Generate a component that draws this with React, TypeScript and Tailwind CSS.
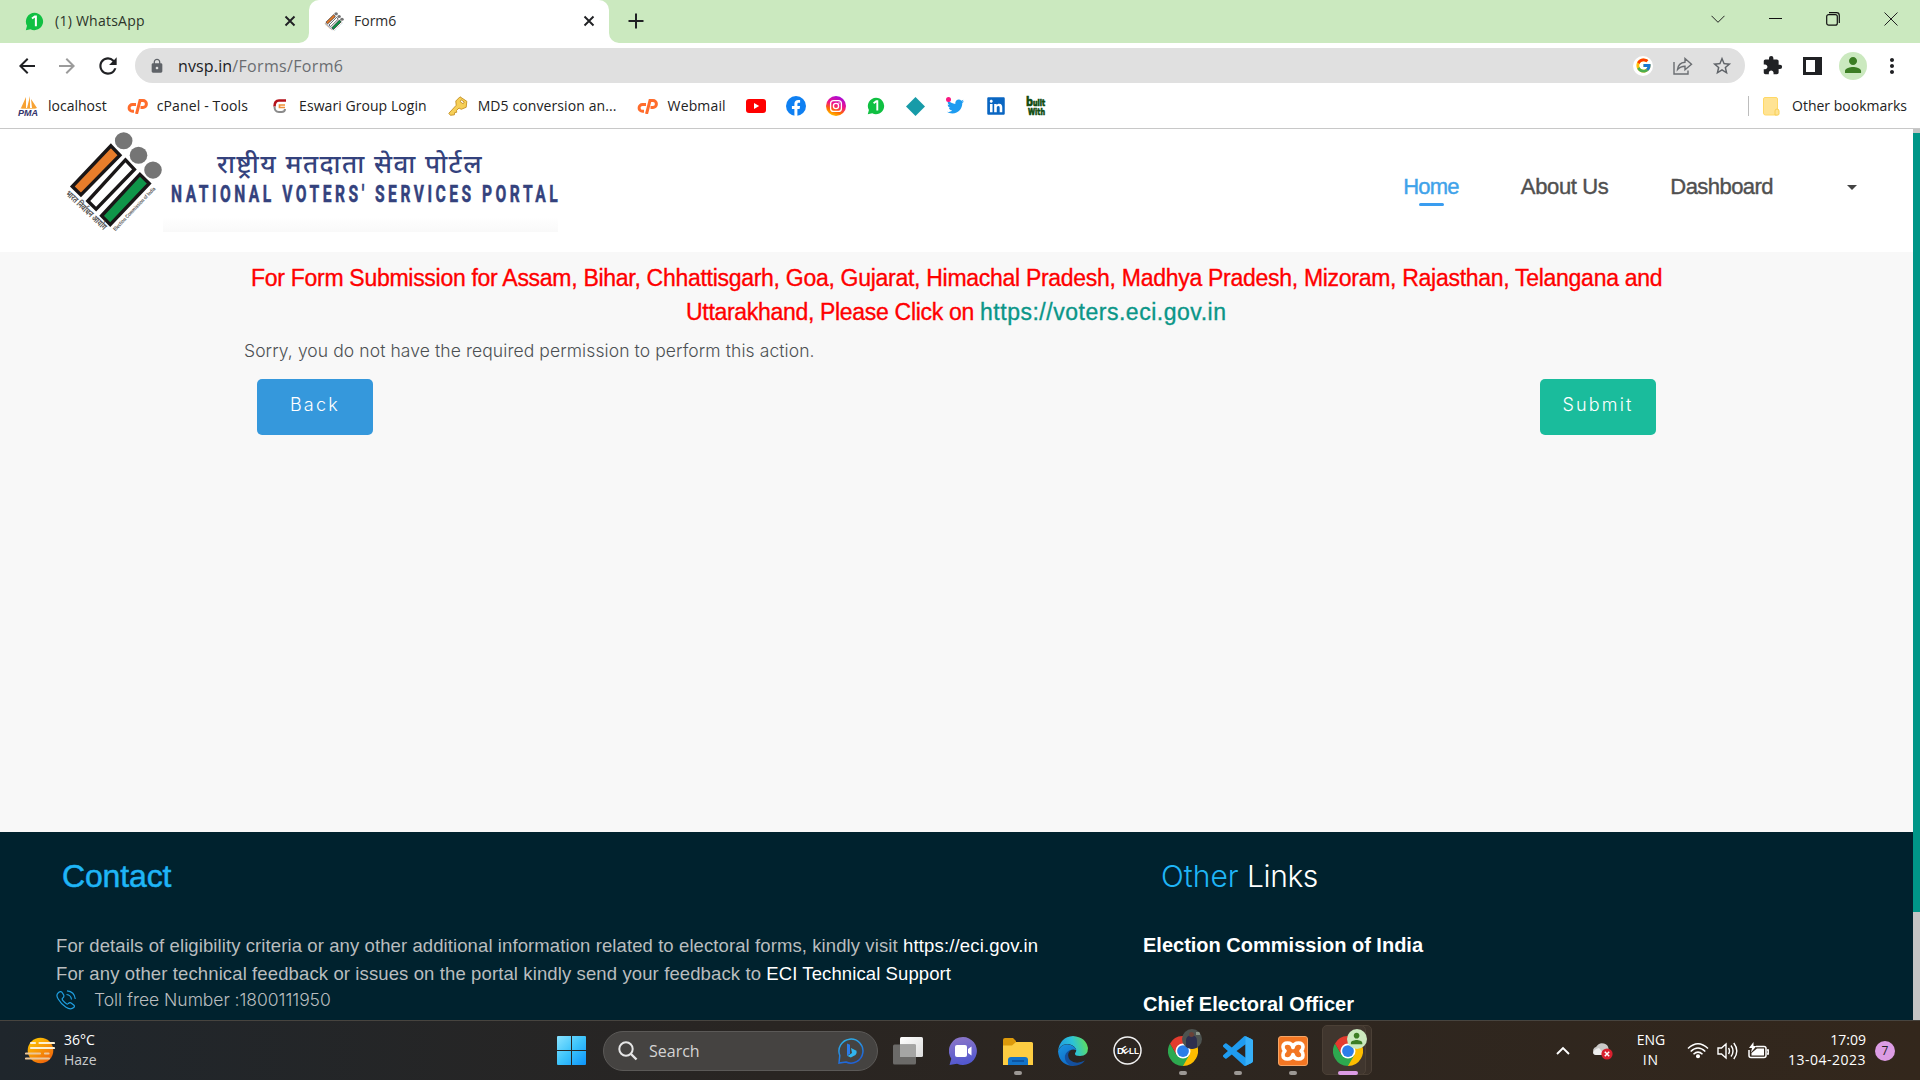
import { useLayoutEffect, useRef } from 'react';
import type { ReactNode } from 'react';
import { FcGoogle } from 'react-icons/fc';
import { FaTwitter, FaLinkedin } from 'react-icons/fa';
import { MdArrowBack, MdArrowForward, MdRefresh, MdLock, MdExtension, MdPerson, MdStarBorder, MdMoreVert } from 'react-icons/md';

/* Single line of text whose tracking is adjusted so that it spans a given width. */
function Fit({ w, className = '', children }: { w: number; className?: string; children: string }) {
  const ref = useRef<HTMLSpanElement>(null);
  useLayoutEffect(() => {
    const el = ref.current;
    if (!el) return;
    el.style.letterSpacing = '0px';
    const natural = el.offsetWidth;
    // One pixel of tracking shows how many clusters the script really has.
    el.style.letterSpacing = '1px';
    const clusters = Math.max(1, el.offsetWidth - natural);
    el.style.letterSpacing = `${(w - natural) / clusters}px`;
  }, [w, children]);
  return (
    <span ref={ref} className={`inline-block shrink-0 whitespace-pre ${className}`}>
      {children}
    </span>
  );
}

const Close = () => (
  <svg width="12" height="12" viewBox="0 0 12 12" stroke="#202124" strokeWidth="1.9" className="shrink-0">
    <path d="M1.5 1.5l9 9M10.5 1.5l-9 9" />
  </svg>
);

const OneBubble = ({ size }: { size: number }) => (
  <svg width={size} height={size} viewBox="0 0 18 18" className="shrink-0">
    <path d="M9 .8a8.2 8.2 0 1 1-3.8 15.5L.8 17.3l1.1-4.2A8.2 8.2 0 0 1 9 .8z" fill="#10c042" />
    <path d="M6.6 6.2L9.3 4.3h1v9.2" fill="none" stroke="#fff" strokeWidth="1.9" />
  </svg>
);

const CPanel = () => (
  <svg width="21" height="15" viewBox="0 0 21 15" fill="none" stroke="#ff6c2c" strokeWidth="3" className="ml-[20px] shrink-0">
    <path d="M9 5.500H5.500a3.400 3.400 0 0 0 0 6.800H7" />
    <path d="M9.500 15L13 1.600h3a3.300 3.300 0 0 1 0 6.800h-2.500" />
  </svg>
);

const Emblem = ({ className }: { className: string }) => (
  <svg viewBox="66 32 290 303" preserveAspectRatio="none" className={`overflow-visible ${className}`}>
    <g fill="#757575">
      <circle cx="242" cy="61" r="25.500" />
      <circle cx="285" cy="104" r="25.500" />
      <circle cx="327" cy="148" r="25.500" />
    </g>
    <g stroke="#191617" strokeWidth="10">
      <path d="M205 76L231 104L118 222L93 197Z" fill="#e87d2b" />
      <path d="M247 118L273 146L162 264L138 240Z" fill="#fff" />
      <path d="M289 161L316 188L203 310L178 284Z" fill="#0f9549" />
    </g>
    <text transform="translate(72 220) rotate(44)" fontSize="27" textLength="154" lengthAdjust="spacingAndGlyphs" fontWeight="700" fill="#555" fontFamily="Noto Sans, sans-serif">भारत निर्वाचन आयोग</text>
    <text transform="translate(218 330) rotate(-47)" fontSize="16" textLength="172" lengthAdjust="spacingAndGlyphs" fontWeight="700" fill="#555" fontFamily="Liberation Sans, sans-serif">Election Commission of India</text>
  </svg>
);

const Chrome = () => (
  <svg width="30" height="30" viewBox="0 0 48 48">
    <path d="M24 24L3.2 12A24 24 0 0 1 44.8 12Z" fill="#e33b2e" />
    <path d="M24 24L44.8 12A24 24 0 0 1 24 48Z" fill="#fdbd00" />
    <path d="M24 12h20.8L34.4 30z" fill="#fdbd00" />
    <path d="M13.6 30L3.2 12 A24 24 0 0 0 24 48 L34.4 30Z" fill="#2da94f" />
    <path d="M24 12L3.2 12 13.6 30 24 24z" fill="#e33b2e" />
    <circle cx="24" cy="24" r="12" fill="#fff" />
    <circle cx="24" cy="24" r="9.4" fill="#2b7de9" />
  </svg>
);

function TaskCell({ children, dot = '' }: { children?: ReactNode; dot?: string }) {
  return (
    <div className="relative flex h-full w-[55px] shrink-0 items-center justify-center">
      {children}
      {dot && <span className={`absolute bottom-[5px] h-1 rounded-full ${dot}`} />}
    </div>
  );
}

const Avatar = ({ size }: { size: string }) => (
  <span className={`flex items-center justify-center rounded-full bg-[#cbe9bf] text-[#3b7d23] ${size}`}>
    <MdPerson className="h-[86%] w-[86%]" />
  </span>
);

function TabStrip() {
  return (
    <div className="flex h-[43px] shrink-0 bg-[#cbe9bf]">
      <div className="flex w-[309px] items-center pb-[1px] pl-[25px]">
        <OneBubble size={19} />
        <Fit w={90} className="mb-[2px] ml-[11px] text-[14px] text-[#2c3329]">(1) WhatsApp</Fit>
        <div className="ml-auto mr-[13px]"><Close /></div>
      </div>
      <div className="relative flex w-[300px] items-center rounded-t-[10px] bg-white pb-[1px] pl-[15px]">
        <svg className="absolute -left-[10px] bottom-0" width="10" height="10"><path d="M10 0v10H0A10 10 0 0 0 10 0z" fill="#fff" /></svg>
        <svg className="absolute -right-[10px] bottom-0" width="10" height="10"><path d="M0 0v10h10A10 10 0 0 1 0 0z" fill="#fff" /></svg>
        <Emblem className="h-[19px] w-[20px] shrink-0" />
        <Fit w={42} className="mb-[2px] ml-[10px] text-[14px] text-[#2c2c2c]">Form6</Fit>
        <div className="ml-auto mr-[14px]"><Close /></div>
      </div>
      <svg className="ml-[19px] mt-[13px]" width="16" height="16" stroke="#202124" strokeWidth="2"><path d="M8 .5v15M.5 8h15" /></svg>
      <div className="ml-auto mr-[22px] flex h-[37px] items-center">
        <svg width="14" height="8" fill="none" stroke="#222"><path d="M.5.8L7 7.3 13.500.8" /></svg>
        <span className="ml-[44px] h-px w-[13px] bg-[#111]" />
        <svg className="ml-[44px]" width="14" height="14" fill="none" stroke="#111" strokeWidth="1.2"><rect x=".7" y="2.6" width="10.600" height="10.600" rx="2" /><path d="M3 .7h7.500a2.800 2.800 0 0 1 2.800 2.800V11" /></svg>
        <svg className="ml-[44px]" width="14" height="14" stroke="#222"><path d="M.5.5l13 13M13.500.5l-13 13" /></svg>
      </div>
    </div>
  );
}

function Toolbar() {
  return (
    <div className="flex h-[45px] shrink-0 items-center">
      <MdArrowBack className="ml-[15px] h-[24px] w-[24px] text-[#202124]" />
      <MdArrowForward className="ml-[16px] h-[24px] w-[24px] text-[#9b9b9b]" />
      <MdRefresh className="ml-[16px] h-[26px] w-[26px] text-[#202124]" />
      <div className="ml-[14px] flex h-[35px] w-[1610px] items-center rounded-full bg-[#e0e0e0]">
        <MdLock className="ml-[14px] h-[16px] w-[16px] text-[#5f6368]" />
        <Fit w={54} className="ml-[13px] text-[16px] text-[#202124]">nvsp.in</Fit>
        <Fit w={111} className="text-[16px] text-[#6a6d71]">/Forms/Form6</Fit>
        <span className="ml-auto flex h-5 w-5 items-center justify-center rounded-full bg-white"><FcGoogle className="h-[17px] w-[17px]" /></span>
        <svg className="ml-[20px]" width="20" height="18" fill="none" stroke="#6a6d71" strokeWidth="1.400">
          <path d="M1 5v12h14v-3.500" />
          <path d="M4.500 12.500C5 8 8 5.500 12 5.200V1.500l6.500 5.700-6.500 5.500V9.200c-3.500 0-5.500 1-7.500 3.300z" />
        </svg>
        <MdStarBorder className="ml-[18px] mr-[12px] h-[22px] w-[22px] text-[#5f6368]" />
      </div>
      <MdExtension className="ml-[17px] h-[21px] w-[21px] text-[#202124]" />
      <svg className="ml-[20px]" width="19" height="18"><path fillRule="evenodd" d="M0 0h19v18H0zM3 3v12h9V3z" fill="#202124" /></svg>
      <div className="ml-[17px]"><Avatar size="h-[28px] w-[28px]" /></div>
      <MdMoreVert className="ml-[13px] h-[24px] w-[24px] text-[#202124]" />
    </div>
  );
}

const bm = 'mb-[2px] text-[14px] text-[#222]';
const cell = 'flex w-10 shrink-0 items-center justify-center';

function Bookmarks() {
  return (
    <div className="flex h-[41px] shrink-0 items-center border-b border-[#c8c8c8] pb-[4px]">
      <svg className="ml-[18px] shrink-0 overflow-visible" width="21" height="20" viewBox="0 0 21 20">
        <path d="M8 1v11H3zM12 0v12H9zM13 3l6 9h-5z" fill="#f7a233" />
        <path d="M2 12h17l-2 1H4z" fill="#f9c06d" />
        <text x="0" y="19.500" fontSize="8.500" fontWeight="700" fontStyle="italic" textLength="20" lengthAdjust="spacingAndGlyphs" fill="#33336b" fontFamily="Liberation Sans, sans-serif">PMA</text>
      </svg>
      <Fit w={59} className={`ml-[9px] ${bm}`}>localhost</Fit>
      <CPanel />
      <Fit w={91} className={`ml-[9px] ${bm}`}>cPanel - Tools</Fit>
      <svg className="ml-[25px] shrink-0" width="13" height="15" viewBox="0 0 13 15" fill="none" strokeWidth="2.600">
        <path d="M13 1.500H6Q1.500 1.500 1.500 7.500" stroke="#b5121b" />
        <path d="M12 6H6.500v2.500H12" stroke="#f0913a" strokeWidth="1.700" />
        <path d="M1.500 7.500Q1.500 13 6 13h2.500q3.500 0 3.500-3" stroke="#8b8b8b" strokeWidth="2" />
      </svg>
      <Fit w={128} className={`ml-[13px] ${bm}`}>Eswari Group Login</Fit>
      <svg className="ml-[21px] shrink-0" width="20" height="20" viewBox="0 0 20 20">
        <path fillRule="evenodd" d="M12 .8l6.800 4.500-.6 6-5 2-2.200-1.300-2.500 2.500.2 1.800-2 .2-.3 2.300-4 .5-1.600-2 7.400-8L7.800 5zM13.200 3.800l-1 2 3 2 1-1.800z" fill="#f6cf57" stroke="#c48f22" strokeWidth=".9" />
      </svg>
      <Fit w={139} className={`ml-[10px] ${bm}`}>MD5 conversion an...</Fit>
      <CPanel />
      <Fit w={58} className={`ml-[10px] mr-[10px] ${bm}`}>Webmail</Fit>
      <span className={cell}><svg width="20" height="14"><rect width="20" height="14" rx="3" fill="#f00" /><path d="M8 4v6l5.200-3z" fill="#fff" /></svg></span>
      <span className={cell}>
        <svg width="20" height="20" viewBox="0 0 20 20"><circle cx="10" cy="10" r="10" fill="#0f80f2" /><path d="M8.400 20v-7H5.900v-3h2.500V7.800c0-2.600 1.500-3.900 3.800-3.900l1.900.15v2.600h-1.300c-1.100 0-1.400.6-1.400 1.400V10h2.700l-.5 3h-2.200v7z" fill="#fff" /></svg>
      </span>
      <span className={cell}>
        <svg width="20" height="20" viewBox="0 0 20 20">
          <defs><linearGradient id="ig" x1=".2" y1="1" x2=".6" y2="0"><stop offset="0" stopColor="#ffd600" /><stop offset=".3" stopColor="#ff6a00" /><stop offset=".6" stopColor="#f0128a" /><stop offset="1" stopColor="#a80bd8" /></linearGradient></defs>
          <circle cx="10" cy="10" r="10" fill="url(#ig)" />
          <g fill="none" stroke="#fff" strokeWidth="1.300"><rect x="4.600" y="4.600" width="10.800" height="10.800" rx="3" /><circle cx="10" cy="10" r="2.600" /></g><circle cx="13" cy="7" r=".7" fill="#fff" />
        </svg>
      </span>
      <span className={cell}><OneBubble size={18} /></span>
      <span className={cell}><svg width="19" height="19"><path d="M9.500 0L19 9.500 9.500 19 0 9.500z" fill="#179ba8" /></svg></span>
      <span className={`relative ${cell}`}>
        <FaTwitter className="h-[17px] w-[17px] text-[#1d9bf0]" />
        <i className="absolute -top-[1px] left-[10px] h-[5px] w-[5px] rounded-full bg-[#f91880]" />
      </span>
      <span className={cell}><FaLinkedin className="h-[20px] w-[20px] text-[#0a66c2]" /></span>
      <span className={cell}>
        <svg width="20" height="20" viewBox="0 0 20 20" className="overflow-visible" fill="#0d4a0d" stroke="#0d4a0d" strokeWidth=".7" fontFamily="DejaVu Sans, sans-serif" fontWeight="700">
          <text x="0" y="10" fontSize="12" textLength="7" lengthAdjust="spacingAndGlyphs">b</text>
          <text x="7" y="9.500" fontSize="8" textLength="12" lengthAdjust="spacingAndGlyphs">uilt</text>
          <text x="2" y="18.500" fontSize="9.500" textLength="17" lengthAdjust="spacingAndGlyphs">With</text>
        </svg>
      </span>
      <span className="ml-auto h-5 w-px bg-[#bdbdbd]" />
      <svg className="ml-[14px]" width="17" height="19"><path d="M.5 2Q.5.5 2 .5h11q1.500 0 1.500 1.500v16h-12q-2 0-2-2z" fill="#ffe393" stroke="#ffd866" /><path d="M12 18v-4q0-2 2-2t2 2v3q0 1-1.500 1z" fill="#ffe393" stroke="#f7cf54" /></svg>
      <Fit w={115} className={`ml-[12px] mr-[13px] ${bm}`}>Other bookmarks</Fit>
    </div>
  );
}

const nav = '[-webkit-text-stroke:0.4px_currentColor] text-[22px] text-[#505050]';

function SiteHeader() {
  return (
    <header className="flex h-[123px] shrink-0 bg-white font-['Liberation_Sans',sans-serif]">
      <Emblem className="ml-[63px] mt-[2px] h-[102px] w-[100px] shrink-0" />
      <div className="mt-[2px] flex h-[101px] w-[395px] flex-col bg-linear-to-b from-white from-85% to-[#f9f9f9] pl-[8px] text-[#34427d]">
        <Fit w={266} className="ml-[46px] mt-[13px] self-start font-['Noto_Sans',sans-serif] text-[26px] leading-[38px] font-medium">राष्ट्रीय मतदाता सेवा पोर्टल</Fit>
        <div className="-mt-[1px] origin-left scale-x-[0.68]">
          <Fit w={574} className="[-webkit-text-stroke:0.5px_currentColor] font-['Roboto',sans-serif] text-[23px] leading-[27px] font-bold">NATIONAL VOTERS' SERVICES PORTAL</Fit>
        </div>
      </div>
      <nav className="ml-auto mr-[56px] flex h-[114px] items-center">
        <div className="relative flex flex-col items-center">
          <Fit w={56} className="[-webkit-text-stroke:0.4px_currentColor] text-[22px] text-[#3fa3ea]">Home</Fit>
          <span className="absolute -bottom-[3px] h-[3px] w-[25px] rounded-full bg-[#3a9df0]" />
        </div>
        <Fit w={88} className={`ml-[62px] ${nav}`}>About Us</Fit>
        <Fit w={103} className={`ml-[62px] ${nav}`}>Dashboard</Fit>
        <svg className="ml-[74px] mt-[3px]" width="10" height="6"><path d="M0 0h10L5 5z" fill="#444" /></svg>
      </nav>
    </header>
  );
}

const notice = '[-webkit-text-stroke:0.35px_currentColor] text-[23px] leading-[34px]';
const light = "font-['Inter','Liberation_Sans',sans-serif] font-light";

function SiteMain() {
  return (
    <main className="flex h-[580px] shrink-0 flex-col bg-[#f8f8f8] font-['Liberation_Sans',sans-serif]">
      <div className="mt-[9px] pl-[251px]"><Fit w={1411} className={`text-[#f00] ${notice}`}>For Form Submission for Assam, Bihar, Chhattisgarh, Goa, Gujarat, Himachal Pradesh, Madhya Pradesh, Mizoram, Rajasthan, Telangana and</Fit></div>
      <div className="flex pl-[686px]">
        <Fit w={294} className={`text-[#f00] ${notice}`}>Uttarakhand, Please Click on </Fit>
        <Fit w={247} className={`text-[#0b9688] ${notice}`}>https://voters.eci.gov.in</Fit>
      </div>
      <div className="mt-[7px] pl-[244px] leading-[30px]"><Fit w={571} className={`text-[17.500px] text-[#4c5053] ${light}`}>Sorry, you do not have the required permission to perform this action.</Fit></div>
      <div className="mt-[12px] ml-[257px] flex w-[1399px] justify-between">
        <button className="flex h-[56px] w-[116px] justify-center rounded-[5px] bg-[#3598dc] pt-[12px] text-white"><Fit w={50} className={`text-[18px] ${light}`}>Back</Fit></button>
        <button className="flex h-[56px] w-[116px] justify-center rounded-[5px] bg-[#1abc9c] pt-[12px] text-white"><Fit w={71} className={`text-[18px] ${light}`}>Submit</Fit></button>
      </div>
    </main>
  );
}

const info = 'text-[18.5px] leading-[28px]';

function SiteFooter() {
  return (
    <footer className="flex h-[188px] shrink-0 overflow-hidden bg-[#00222e] font-['Liberation_Sans',sans-serif]">
      <div className="flex w-[1143px] flex-col pl-[56px]">
        <div className="mt-[24px] h-[46px] pl-[6px] leading-[40px]"><Fit w={109} className="[-webkit-text-stroke:0.5px_currentColor] text-[32px] text-[#1fb5f6]">Contact</Fit></div>
        <div className="mt-[30px] flex">
          <Fit w={847} className={`text-[#b9bdbf] ${info}`}>For details of eligibility criteria or any other additional information related to electoral forms, kindly visit </Fit>
          <Fit w={135} className={`text-white ${info}`}>https://eci.gov.in</Fit>
        </div>
        <div className="flex">
          <Fit w={710} className={`text-[#b9bdbf] ${info}`}>For any other technical feedback or issues on the portal kindly send your feedback to </Fit>
          <Fit w={185} className={`text-white ${info}`}>ECI Technical Support</Fit>
        </div>
        <div className="flex items-center">
          <svg width="20" height="20" viewBox="0 0 20 20" fill="none" stroke="#1f9fe0" strokeWidth="1.200">
            <path d="M2.500 2.500Q5 .5 6.500 3l1.300 2.300Q8.300 7 6.500 8.200q-.8 1 .5 2.500 2.300 2.700 3.800 3.300 1 .3 1.600-.5 1.500-1.500 3-.3l2.300 1.800q1.500 1.300 0 2.500-3 2.800-8-.5-5-3.500-7.500-8Q-.5 5 2.500 2.500zM10.500 4.500q4.500.5 5 5M11 .8q7.500.7 8.300 8.200" />
          </svg>
          <Fit w={237} className={`ml-[18px] text-[17.500px] leading-[24px] text-[#b9bdbf] ${light}`}>Toll free Number :1800111950</Fit>
        </div>
      </div>
      <div className="flex flex-col">
        <div className={`mt-[24px] flex h-[46px] pl-[18px] text-[30px] leading-[40px] ${light}`}>
          <Fit w={86} className="text-[#1fb5f6]">Other </Fit>
          <Fit w={71} className="text-white">Links</Fit>
        </div>
        <div className="mt-[30px] leading-[28px]"><Fit w={280} className="text-[20px] font-bold text-white">Election Commission of India</Fit></div>
        <div className="mt-[29px] leading-[28px]"><Fit w={211} className="text-[20px] font-bold text-white">Chief Electoral Officer</Fit></div>
      </div>
    </footer>
  );
}

function Taskbar() {
  const dot = 'w-2 bg-[#9c9894]';
  return (
    <div className="flex h-[60px] shrink-0 items-center border-t border-[#47443f] bg-linear-to-r from-[#1f262c] via-[#292522] via-40% to-[#33271c] text-white">
      <svg className="ml-[25px] shrink-0" width="30" height="27" viewBox="0 0 30 27">
        <defs><linearGradient id="sun" x1="0" y1="0" x2=".7" y2="1"><stop offset="0" stopColor="#ffd000" /><stop offset="1" stopColor="#f0650c" /></linearGradient></defs>
        <circle cx="15.500" cy="13.500" r="12.800" fill="url(#sun)" />
        <g stroke="#fdf0d2" strokeWidth="2.200" strokeLinecap="round"><path d="M6 6h4M14.500 6H29M6 11h23" /><path d="M1 16.500h14M20 16.500h3.500M1 21.500h23" stroke="#ecc79a" /></g>
      </svg>
      <div className="mb-[2px] ml-[9px] flex w-[479px] shrink-0 flex-col text-[14px] leading-[20px]">
        <Fit w={31} className="self-start">36°C</Fit>
        <Fit w={33} className="self-start text-[#c9cbcc]">Haze</Fit>
      </div>
      <div className="flex h-full w-[60px] shrink-0 items-center pl-[14px]">
        <svg width="29" height="29" viewBox="0 0 29 29">
          <defs><linearGradient id="win" x1="0" y1="0" x2="1" y2="1"><stop offset="0" stopColor="#8ae4ff" /><stop offset=".5" stopColor="#3cc3fb" /><stop offset="1" stopColor="#0c94fb" /></linearGradient></defs>
          <path d="M0 1q0-1 1-1h13v14H0zM15 0h13q1 0 1 1v13H15zM0 15h14v14H1q-1 0-1-1zM15 15h14v13q0 1-1 1H15z" fill="url(#win)" />
        </svg>
      </div>
      <div className="flex h-[40px] w-[275px] shrink-0 items-center rounded-full border border-[#5b5957] bg-[#454341]">
        <svg className="ml-[14px]" width="20" height="20" fill="none" stroke="#e6e6e6"><circle cx="8" cy="8" r="6.700" strokeWidth="2" /><path d="M13 13l5.500 5.500" strokeWidth="2.400" /></svg>
        <Fit w={51} className="ml-[11px] text-[16px] text-[#d4d4d4]">Search</Fit>
        <svg className="ml-auto mr-[13px]" width="26" height="26" viewBox="0 0 26 26" fill="none">
          <defs><linearGradient id="bing" x1="0" y1="0" x2=".4" y2="1"><stop offset="0" stopColor="#2fb8ea" /><stop offset="1" stopColor="#1f63d8" /></linearGradient></defs>
          <path d="M1 25l.8-7.500A12 12 0 1 1 8 24z" stroke="url(#bing)" strokeWidth="1.500" />
          <path d="M9 5.500l3 1.300v8.500l-3 3z" fill="#2b7be8" /><path d="M13 10l5.500 2.800q.8 3-1 4.300l-4.700 2.300-3.300-1.500 4.500-3z" fill="#31b5ee" />
        </svg>
      </div>
      <div className="ml-[2px] flex h-full shrink-0">
        <TaskCell>
          <svg width="30" height="28"><defs><linearGradient id="tv" x1="0" y1="0" x2="1" y2="1"><stop offset="0" stopColor="#fff" /><stop offset="1" stopColor="#dcdcdc" /></linearGradient></defs><rect x="7" width="23" height="20" rx="1.500" fill="url(#tv)" /><rect y="7.500" width="23" height="20" rx="1.500" fill="#6b6a68" /><path d="M7 7.500h16V20H7z" fill="#a5a5a4" /></svg>
        </TaskCell>
        <TaskCell>
          <svg width="28" height="28" viewBox="0 0 28 28"><defs><linearGradient id="chat" x1="0" y1="0" x2=".2" y2="1"><stop offset="0" stopColor="#8f78c8" /><stop offset="1" stopColor="#5358cf" /></linearGradient></defs><path d="M14 0a14 14 0 1 1-6 26.700L.5 28l1.800-6.300A14 14 0 0 1 14 0z" fill="url(#chat)" /><rect x="6" y="8" width="12" height="12" rx="2" fill="#fff" /><path d="M19 12l3.500-2.500v9L19 16z" fill="#fff" /></svg>
        </TaskCell>
        <TaskCell dot={dot}>
          <svg width="30" height="28"><path d="M0 3q0-2 2-2h8l3 3v8H0z" fill="#dd9a0b" /><path d="M0 8.500h9L13 5h15.500Q30 5 30 6.500V28H0z" fill="#fdcd42" /><path d="M5 28v-5q0-3 3-3h14q3 0 3 3v5z" fill="#1273c9" /><path d="M9 24h12" stroke="#0b4b94" strokeWidth="1.500" /></svg>
        </TaskCell>
        <TaskCell>
          <svg width="30" height="30" viewBox="0 0 30 30">
            <defs>
              <linearGradient id="e1" x1="0" y1=".5" x2="1" y2=".3"><stop offset="0" stopColor="#1f9be0" /><stop offset=".5" stopColor="#2cc2d8" /><stop offset="1" stopColor="#62e052" /></linearGradient>
              <linearGradient id="e2" x1="0" y1="0" x2=".5" y2="1"><stop offset="0" stopColor="#1a95e0" /><stop offset="1" stopColor="#0f6cc9" /></linearGradient>
            </defs>
            <path d="M0 15Q2 1 15 0 28 1 30 12q0 8-8 8-5.500 0-5-2.500 2-2 1-4.500Q15 8 8.500 8 2 9 0 15z" fill="url(#e1)" />
            <path d="M0 15Q3 8.500 9 8.200q7 .3 9.500 6-6-2.200-9 3-2 7 4 12.500Q1 28.500 0 15z" fill="url(#e2)" />
            <path d="M12.500 14Q8 19 12 24q6 5 15 .5-4.500 6-13.500 5.400Q6 27 7 19.500q1.500-4.500 5.500-5.500z" fill="#14509e" />
          </svg>
        </TaskCell>
        <TaskCell>
          <svg width="29" height="29" viewBox="0 0 29 29" fontSize="9.500" fontWeight="700" fill="#fff" fontFamily="Liberation Sans, sans-serif"><circle cx="14.500" cy="14.500" r="13.500" fill="none" stroke="#f2f2f2" strokeWidth="1.500" /><text x="4" y="18">D</text><text transform="translate(11.500 18.500) rotate(-35)">E</text><text x="16" y="18" textLength="10" lengthAdjust="spacingAndGlyphs">LL</text></svg>
        </TaskCell>
        <TaskCell dot={dot}>
          <Chrome />
          <span className="absolute top-[8px] left-[27px] h-5 w-5 overflow-hidden rounded-full bg-[#4d5350]">
            <i className="absolute top-[6px] left-[4px] h-[14px] w-[11px] rounded-t-full bg-[#2e2f4e]" />
            <i className="absolute top-[3px] left-[7px] h-[5px] w-[5px] rounded-full bg-[#6b4238]" />
            <i className="absolute top-[3px] left-[14px] h-[3px] w-[4px] bg-[#8b968a]" />
          </span>
        </TaskCell>
        <TaskCell dot={dot}>
          <svg width="30" height="30" viewBox="0 0 24 24">
            <path fill="#1f9cf0" d="M23.150 2.587L18.210.21a1.494 1.494 0 0 0-1.705.29l-9.460 8.630-4.120-3.128a.999.999 0 0 0-1.276.057L.327 7.261A1 1 0 0 0 .326 8.740L3.899 12 .326 15.260a1 1 0 0 0 .001 1.479L1.650 17.940a.999.999 0 0 0 1.276.057l4.120-3.128 9.460 8.630a1.492 1.492 0 0 0 1.704.29l4.942-2.377A1.500 1.500 0 0 0 24 20.060V3.939a1.500 1.500 0 0 0-.85-1.352zm-5.146 14.861L10.826 12l7.178-5.448v10.896z" />
            <path fill="#37b0f8" d="M18 .2l5.150 2.387A1.500 1.500 0 0 1 24 3.939V20.060l-.85 1.352L18 23.800z" />
          </svg>
        </TaskCell>
        <TaskCell dot={dot}>
          <span className="flex h-[30px] w-[30px] items-center justify-center rounded-[3px] border border-[#f5a566] bg-[#f37623]">
            <svg width="24" height="20" viewBox="0 0 24 20" fill="none" stroke="#fff" strokeWidth="3.600" strokeLinejoin="round"><path d="M12 6.500Q11 2 6.500 2 2 2 2 6q0 2.500 2 4-2 1.500-2 4 0 4 4.500 4 4.500 0 5.500-4.500 1 4.500 5.500 4.500 4.500 0 4.500-4 0-2.500-2-4 2-1.500 2-4 0-4-4.500-4Q13 2 12 6.500z" /></svg>
          </span>
        </TaskCell>
        <TaskCell dot="w-5 bg-[#dc9ce4]">
          <span className="absolute top-[4px] left-[4px] h-[50px] w-[48px] rounded-[5px] border border-[#4b4036] bg-[#3b3129]" />
          <span className="absolute top-[4px] left-[2px] h-[50px] w-[44px] rounded-[5px] border border-[#4b4036] bg-[#40362e]" />
          <span className="relative"><Chrome /></span>
          <span className="absolute top-[8px] left-[27px]"><Avatar size="h-5 w-5" /></span>
        </TaskCell>
      </div>
      <div className="ml-auto flex h-full shrink-0 items-center">
        <svg width="14" height="9" fill="none" stroke="#fff" strokeWidth="1.900"><path d="M1 8l6-6 6 6" /></svg>
        <svg className="ml-[22px]" width="22" height="18"><path d="M4 13a4.200 4.200 0 0 1 0-8Q7 0 12 1.500q4 1 4.500 5V13z" fill="#c9c8c6" /><path d="M1 11q1-4 6-5l6 7H4q-2.500 0-3-2z" fill="#eee" /><circle cx="15" cy="12" r="5.600" fill="#d9202e" /><path d="M12.800 9.800l4.400 4.400M17.200 9.800l-4.400 4.400" stroke="#fff" strokeWidth="1.500" /></svg>
        <div className="mb-[1px] ml-[22px] flex w-[30px] flex-col items-center text-[14px] leading-[20px]"><Fit w={29}>ENG</Fit><Fit w={16}>IN</Fit></div>
        <svg className="ml-[21px]" width="22" height="17" fill="none" stroke="#fff" strokeWidth="1.500"><path d="M1 6.500q10-9.500 20 0M3.700 9.500q7.300-7 14.600 0M6.500 12.300q4.500-4.300 9 0" /><circle cx="11" cy="14.300" r="1.300" fill="#fff" /></svg>
        <svg className="ml-[8px]" width="22" height="18" fill="none" stroke="#fff" strokeWidth="1.400"><path d="M1 6v6h3.500l4.500 4V2L4.500 6zM11.500 6q2 3 0 6M14 3.500q4 5.500 0 11M16.800 1q6 8 0 16" /></svg>
        <svg className="ml-[9px]" width="21" height="17" fill="none" stroke="#fff" strokeWidth="1.500"><path d="M8 4.500h8q2 0 2 2v7q0 2-2 2H3q-2 0-2-2V8" /><path d="M19 8h1.200v4H19" /><path d="M9 6.500h7v7H3.500V11z" fill="#fff" stroke="none" /><path d="M5.500 0L1 6h3l-1 4.500L8.500 4h-3z" fill="#fff" stroke="none" /></svg>
        <div className="mb-[2px] ml-[19px] flex flex-col items-end text-[14px] leading-[20px]"><Fit w={36}>17:09</Fit><Fit w={78}>13-04-2023</Fit></div>
        <span className="ml-[9px] mr-[25px] flex h-5 w-5 items-center justify-center rounded-full bg-[#dc9ce4] text-[12px] text-[#222]">7</span>
      </div>
    </div>
  );
}

export default function App() {
  return (
    <div className="flex h-[1080px] w-[1920px] flex-col overflow-hidden bg-white font-['Open_Sans','Noto_Sans',sans-serif]">
      <TabStrip />
      <Toolbar />
      <Bookmarks />
      <div className="flex h-[891px] shrink-0">
        <div className="flex w-[1913px] flex-col">
          <SiteHeader />
          <SiteMain />
          <SiteFooter />
        </div>
        <div className="w-[7px] bg-[#c4c4c4] pt-[4px]"><div className="h-[779px] bg-[#009688]" /></div>
      </div>
      <Taskbar />
    </div>
  );
}
